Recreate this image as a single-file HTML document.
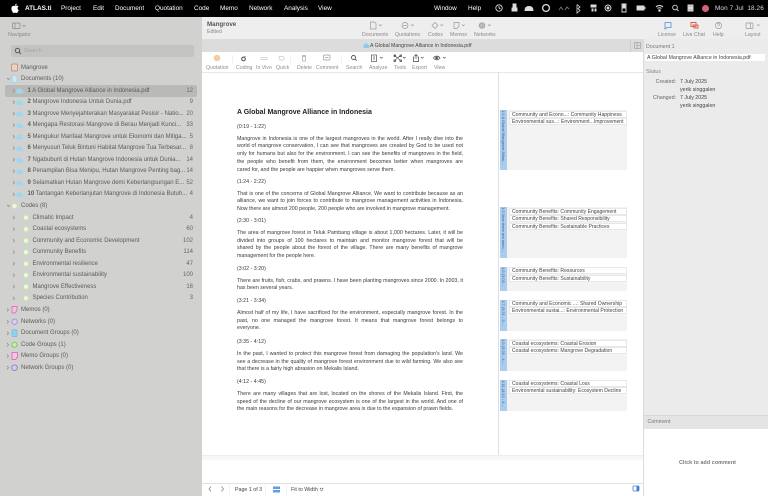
<!DOCTYPE html>
<html><head><meta charset="utf-8">
<style>
html,body{margin:0;padding:0;width:768px;height:496px;overflow:hidden;background:#fff}
body{font-family:"Liberation Sans",sans-serif;position:relative;color:#333}
div,span,svg{position:absolute}
.t{white-space:nowrap;line-height:8px}
.m{top:4.5px;font-size:6.4px;color:#fff;white-space:nowrap;line-height:8px}
.lb{font-size:5.2px;color:#8a8a8a;top:32px;white-space:nowrap;line-height:7px}
.lc{font-size:5.2px;color:#8d8d8d;top:65px;white-space:nowrap;line-height:7px}
.r{font-size:6px;color:#5a5a5a;white-space:nowrap;line-height:8px}
.n{font-size:6px;color:#666;white-space:nowrap;line-height:8px;right:575px;text-align:right}
.l{left:237px;width:226px;font-size:5.3px;line-height:7px;color:#3a3a3a;text-align:justify;text-align-last:justify;white-space:nowrap;font-family:"Liberation Sans",sans-serif}
.e{text-align-last:left}
.box{left:507px;width:120px;background:#f3f3f3}
.blue{left:500px;width:7px;background:#a9cdee}
.row{left:509px;width:118px;height:7px;background:#fff;border:.5px solid #e8e8e8;box-sizing:border-box;font-size:5.1px;line-height:6.4px;color:#444;white-space:nowrap;padding-left:2px}
.v{left:500px;width:7px;writing-mode:vertical-rl;font-size:4px;line-height:7px;color:#3e6085;white-space:nowrap;text-align:left;overflow:hidden}
</style></head><body>

<!-- menu bar -->
<div style="left:0;top:0;width:768px;height:17px;background:#000"></div>
<svg style="left:10px;top:3px" width="10" height="11" viewBox="0 0 10 11"><path d="M5 3C4 2.5 2 2.500 1.500 4.500 1 6.500 2.500 10 4 10c.5 0 .7-.3 1.200-.3S6 10 6.500 10C7.500 10 8.500 8 8.700 7 7.300 6.500 7 4.300 8.500 3.500 7.500 2.300 6 2.600 5 3zM5 2.600C5 1.500 5.800.7 6.700.6 6.800 1.700 6 2.600 5 2.600z" fill="#fff"/></svg>
<div class="m" style="left:25px;font-weight:bold">ATLAS.ti</div>
<div class="m" style="left:61px">Project</div>
<div class="m" style="left:93px">Edit</div>
<div class="m" style="left:115px">Document</div>
<div class="m" style="left:155px">Quotation</div>
<div class="m" style="left:194px">Code</div>
<div class="m" style="left:220px">Memo</div>
<div class="m" style="left:249px">Network</div>
<div class="m" style="left:284px">Analysis</div>
<div class="m" style="left:318px">View</div>
<div class="m" style="left:434px">Window</div>
<div class="m" style="left:468px">Help</div>
<svg style="left:494px;top:0" width="236" height="17" viewBox="494 0 236 17" fill="none" stroke="#ddd" stroke-width=".9">
<circle cx="499" cy="8" r="3.200"/><path d="M499 6v2l1.500 1"/>
<path d="M512 11h5V8h-5zM513 7h3V4h-3z" fill="#ddd"/>
<path d="M525 10.500c0-3 2-4 4-4s4 1 4 4z" fill="#ddd"/>
<circle cx="546" cy="8" r="3.400" stroke-width="1.300"/>
<path d="M559 10l2-3 2 3M565 10l2-3 2 2" stroke="#777"/>
<path d="M577 4.500l3 2.500-2 1.500 2 2-3 2.500V4.500" stroke-width=".8"/>
<path d="M591 5h5v2h-5zM592 9h1v2h-1zM595 9h1v2h-1z" fill="#ddd"/>
<circle cx="608" cy="8" r="3"/><circle cx="608" cy="8" r="1" fill="#ddd"/>
<path d="M622 4h4v8h-4z"/><path d="M623 5h2v3h-2z" fill="#ddd"/>
<path d="M637 6h7v4h-7z" fill="#ddd"/><path d="M645 7v2"/>
<path d="M656 7c2-2 5-2 7 0M657.500 8.500c1-1 3-1 4 0" stroke-width="1"/><circle cx="659.500" cy="10.500" r=".8" fill="#ddd"/>
<circle cx="675" cy="7.500" r="2.300"/><path d="M677 9.500l1.500 1.500"/>
<path d="M688 5h5v2.500h-5zM688 8.500h5V11h-5z" fill="#bbb"/>
</svg>
<div style="left:702px;top:5px;width:7px;height:7px;border-radius:50%;background:#d9607a"></div>
<div class="m" style="left:715px;color:#ddd;letter-spacing:.1px">Mon 7 Jul&nbsp; 18.26</div>

<!-- sidebar -->
<div style="left:0;top:17px;width:202px;height:479px;background:#d1d2d0"></div>
<div style="left:202px;top:17px;width:566px;height:22px;background:#eeeeee"></div>
<div style="left:202px;top:39px;width:566px;height:13px;background:#dcdcdc"></div>
<div style="left:202px;top:52px;width:442px;height:20px;background:#fff"></div>
<div style="left:202px;top:72px;width:442px;height:.5px;background:#e8e8e8"></div>

<svg style="left:12px;top:22px" width="16" height="8" fill="none" stroke="#8a8a8a" stroke-width=".7"><rect x=".5" y="1" width="7.500" height="5.500" rx="1"/><path d="M3 1v5.500"/><path d="M10.500 3l1.500 1.500L13.500 3"/></svg>
<div class="t" style="left:8px;top:31px;font-size:5.4px;color:#8a8a8a">Navigator</div>
<div style="left:11px;top:45px;width:183px;height:12px;background:#c3c4c2;border-radius:2px"></div>
<svg style="left:14px;top:47px" width="8" height="8" fill="none" stroke="#555" stroke-width="1"><circle cx="3.500" cy="3.500" r="2.200"/><path d="M5.200 5.200L7 7"/></svg>
<div class="t" style="left:24px;top:47px;font-size:5.6px;color:#a4a5a3">Search</div>

<div style="left:5px;top:85px;width:192px;height:11.500px;background:#b9bab8;border-radius:2px"></div>

<svg style="left:0;top:60px" width="60" height="316" viewBox="0 60 60 316">
<g fill="none" stroke="#8a8a8a" stroke-width=".7">
<path d="M7 78l1.500 1.500L10 78M7 205l1.500 1.500L10 205"/>
<path d="M13 89l1.500 1.700L13 92.500M13 100.500l1.500 1.700-1.500 1.700M13 112l1.500 1.700-1.500 1.700M13 123.500l1.500 1.700-1.500 1.700M13 135l1.500 1.700-1.500 1.700M13 146.500l1.500 1.700-1.500 1.700M13 158l1.500 1.700-1.500 1.700M13 169.500l1.500 1.700-1.500 1.700M13 181l1.500 1.700-1.500 1.700M13 192.500l1.500 1.700-1.500 1.700"/>
<path d="M13 216l1.500 1.700-1.500 1.700M13 227.500l1.500 1.700-1.500 1.700M13 239l1.500 1.700-1.500 1.700M13 250.500l1.500 1.700-1.500 1.700M13 262l1.500 1.700-1.500 1.700M13 273.500l1.500 1.700-1.500 1.700M13 285l1.500 1.700-1.500 1.700M13 296.500l1.500 1.700-1.500 1.700"/>
<path d="M7 308l1.500 1.700L7 311.500M7 320l1.500 1.700L7 323.500M7 331.500l1.500 1.700L7 335M7 343l1.500 1.700L7 346.500M7 354.500l1.500 1.700L7 358M7 366l1.500 1.700L7 369.500"/>
</g>
<rect x="11.500" y="64" width="6" height="7" rx="1" fill="#e7d3c5" stroke="#c97f5a" stroke-width=".7"/>
<rect x="12" y="75.500" width="5" height="7" rx="1" fill="#cde9f5" stroke="#8fcbe6" stroke-width=".6"/>
<g fill="#a3d6ee"><path d="M17.500 93.500c-1 0-1.300-.7-1.300-1.500 0-2 1-3.500 2.800-3.500 1.500 0 2.500.9 3 2 .7.200 1.500.8 1.500 1.500 0 1-.5 1.500-1.500 1.500z"/>
<path d="M17.500 105c-1 0-1.300-.7-1.300-1.500 0-2 1-3.500 2.800-3.500 1.500 0 2.500.9 3 2 .7.200 1.500.8 1.500 1.500 0 1-.5 1.500-1.500 1.500z"/>
<path d="M17.500 116.500c-1 0-1.300-.7-1.300-1.500 0-2 1-3.500 2.800-3.500 1.500 0 2.500.9 3 2 .7.200 1.500.8 1.500 1.500 0 1-.5 1.500-1.500 1.500z"/>
<path d="M17.500 128c-1 0-1.300-.7-1.300-1.500 0-2 1-3.500 2.800-3.500 1.500 0 2.500.9 3 2 .7.200 1.500.8 1.500 1.500 0 1-.5 1.500-1.500 1.500z"/>
<path d="M17.500 139.500c-1 0-1.300-.7-1.300-1.500 0-2 1-3.500 2.800-3.500 1.500 0 2.500.9 3 2 .7.200 1.500.8 1.500 1.500 0 1-.5 1.500-1.500 1.500z"/>
<path d="M17.500 151c-1 0-1.300-.7-1.300-1.500 0-2 1-3.500 2.800-3.500 1.500 0 2.500.9 3 2 .7.200 1.500.8 1.500 1.500 0 1-.5 1.500-1.500 1.500z"/>
<path d="M17.500 162.500c-1 0-1.300-.7-1.300-1.500 0-2 1-3.500 2.800-3.500 1.500 0 2.500.9 3 2 .7.200 1.500.8 1.500 1.500 0 1-.5 1.500-1.500 1.500z"/>
<path d="M17.500 174c-1 0-1.300-.7-1.300-1.500 0-2 1-3.500 2.800-3.500 1.500 0 2.500.9 3 2 .7.200 1.500.8 1.500 1.500 0 1-.5 1.500-1.500 1.500z"/>
<path d="M17.500 185.500c-1 0-1.300-.7-1.300-1.500 0-2 1-3.500 2.800-3.500 1.500 0 2.500.9 3 2 .7.200 1.500.8 1.500 1.500 0 1-.5 1.500-1.500 1.500z"/>
<path d="M17.500 197c-1 0-1.300-.7-1.300-1.500 0-2 1-3.500 2.800-3.500 1.500 0 2.500.9 3 2 .7.200 1.500.8 1.500 1.500 0 1-.5 1.500-1.500 1.500z"/></g>
<g fill="#eef6e2" stroke="#c6e5ab" stroke-width="1">
<circle cx="14.500" cy="206" r="2.600"/>
<circle cx="26" cy="217.700" r="2.600"/><circle cx="26" cy="229.200" r="2.600"/><circle cx="26" cy="240.700" r="2.600"/><circle cx="26" cy="252.200" r="2.600"/><circle cx="26" cy="263.700" r="2.600"/><circle cx="26" cy="275.200" r="2.600"/><circle cx="26" cy="286.700" r="2.600"/><circle cx="26" cy="298.200" r="2.600"/></g>
<path d="M12 306.500h5v4l-2 2.500h-3z" fill="#f2c2e4" stroke="#d466b6" stroke-width=".8"/>
<circle cx="14.500" cy="321.700" r="2.700" fill="#d8cdf0" stroke="#9a83d0" stroke-width=".7"/>
<rect x="12" y="329.700" width="5" height="7" rx="1" fill="#8fd0ee" stroke="#6db9dc" stroke-width=".6"/>
<circle cx="14.500" cy="344.700" r="2.600" fill="#c8eaae" stroke="#7cc65a" stroke-width=".9"/>
<path d="M12 352.500h5.500v4.500l-2 2.500H12z" fill="#f5c6e5" stroke="#dd5fb4" stroke-width=".8"/>
<circle cx="14.500" cy="367.700" r="2.800" fill="#d8cdf0" stroke="#8a70c4" stroke-width=".8"/>
</svg>

<div class="r" style="left:21px;top:63.500px">Mangrove</div>
<div class="r" style="left:21px;top:75px">Documents (10)</div>
<div class="r" style="left:27.500px;top:86.700px"><b>1</b> A Global Mangrove Alliance in Indonesia.pdf</div><div class="n" style="top:86.700px">12</div>
<div class="r" style="left:27.500px;top:98.200px"><b>2</b> Mangrove Indonesia Untuk Dunia.pdf</div><div class="n" style="top:98.200px">9</div>
<div class="r" style="left:27.500px;top:109.700px"><b>3</b> Mangrove Menyejahterakan Masyarakat Pesisir - Natio...</div><div class="n" style="top:109.700px">20</div>
<div class="r" style="left:27.500px;top:121.200px"><b>4</b> Mengapa Restorasi Mangrove di Berau Menjadi Kunci...</div><div class="n" style="top:121.200px">33</div>
<div class="r" style="left:27.500px;top:132.700px"><b>5</b> Mengukur Manfaat Mangrove untuk Ekonomi dan Mitiga...</div><div class="n" style="top:132.700px">5</div>
<div class="r" style="left:27.500px;top:144.200px"><b>6</b> Menyusuri Teluk Bintuni Habitat Mangrove Tua Terbesar...</div><div class="n" style="top:144.200px">8</div>
<div class="r" style="left:27.500px;top:155.700px"><b>7</b> Ngabuburit di Hutan Mangrove Indonesia untuk Dunia...</div><div class="n" style="top:155.700px">14</div>
<div class="r" style="left:27.500px;top:167.200px"><b>8</b> Penampilan Bisa Menipu, Hutan Mangrove Penting bag...</div><div class="n" style="top:167.200px">14</div>
<div class="r" style="left:27.500px;top:178.700px"><b>9</b> Selamatkan Hutan Mangrove demi Keberlangsungan E...</div><div class="n" style="top:178.700px">52</div>
<div class="r" style="left:27.500px;top:190.200px"><b>10</b> Tantangan Keberlanjutan Mangrove di Indonesia Butuh...</div><div class="n" style="top:190.200px">4</div>
<div class="r" style="left:21px;top:202px">Codes (8)</div>
<div class="r" style="left:32.500px;top:213.700px">Climatic Impact</div><div class="n" style="top:213.700px">4</div>
<div class="r" style="left:32.500px;top:225.200px">Coastal ecosystems</div><div class="n" style="top:225.200px">60</div>
<div class="r" style="left:32.500px;top:236.700px">Community and Economic Development</div><div class="n" style="top:236.700px">102</div>
<div class="r" style="left:32.500px;top:248.200px">Community Benefits</div><div class="n" style="top:248.200px">114</div>
<div class="r" style="left:32.500px;top:259.700px">Environmental resilience</div><div class="n" style="top:259.700px">47</div>
<div class="r" style="left:32.500px;top:271.200px">Environmental sustainability</div><div class="n" style="top:271.200px">100</div>
<div class="r" style="left:32.500px;top:282.700px">Mangrove Effectiveness</div><div class="n" style="top:282.700px">16</div>
<div class="r" style="left:32.500px;top:294.200px">Species Contribution</div><div class="n" style="top:294.200px">3</div>
<div class="r" style="left:21px;top:306px">Memos (0)</div>
<div class="r" style="left:21px;top:317.700px">Networks (0)</div>
<div class="r" style="left:21px;top:329.200px">Document Groups (0)</div>
<div class="r" style="left:21px;top:340.700px">Code Groups (1)</div>
<div class="r" style="left:21px;top:352.200px">Memo Groups (0)</div>
<div class="r" style="left:21px;top:363.700px">Network Groups (0)</div>

<!-- header -->
<div class="t" style="left:207px;top:21px;font-size:6.2px;font-weight:bold;color:#555">Mangrove</div>
<div class="t" style="left:207px;top:27.500px;font-size:5.2px;color:#888">Edited</div>

<svg style="left:360px;top:20px" width="405" height="12" viewBox="360 20 405 12" fill="none" stroke="#999" stroke-width=".7">
<path d="M370.500 22h4l1.500 1.500V29h-5.500z"/><path d="M379 24.500l1.300 1.300 1.300-1.300"/>
<circle cx="405" cy="25.500" r="3"/><path d="M403 25.500h4"/><path d="M411 24.500l1.300 1.300 1.300-1.300"/>
<path d="M432 25.500l3-3 3 3-3 3z"/><path d="M440.500 24.500l1.300 1.300 1.300-1.300"/>
<path d="M454 22.500h5v3.500l-2 2.500h-3z"/><path d="M462 24.500l1.300 1.300 1.300-1.300"/>
<circle cx="482" cy="25.500" r="2.800" fill="#bbb"/><path d="M488 24.500l1.300 1.300 1.300-1.300"/>
<path d="M665 22.500h6v5h-4l-2 1.500z" stroke="#4a90d9" stroke-width=".8"/>
<path d="M691 22.500h5v4h-5z" stroke="#e25b52" stroke-width=".9"/><path d="M693 25h5v3h-4z" stroke="#e25b52" stroke-width=".9"/>
<circle cx="718.500" cy="25.500" r="3.100"/><path d="M717.500 24.500c0-1.300 2-1.300 2 0 0 .8-1 .8-1 1.700"/>
<rect x="746" y="23" width="7" height="5.500" rx=".8"/><path d="M750.500 23v5.500"/><path d="M757 24.500l1.300 1.300 1.300-1.300"/>
</svg>
<div class="lb" style="left:362px">Documents</div>
<div class="lb" style="left:395px">Quotations</div>
<div class="lb" style="left:428px">Codes</div>
<div class="lb" style="left:450px">Memos</div>
<div class="lb" style="left:474px">Networks</div>
<div class="lb" style="left:658px">License</div>
<div class="lb" style="left:683px">Live Chat</div>
<div class="lb" style="left:713px">Help</div>
<div class="lb" style="left:745px">Layout</div>

<!-- tab -->
<svg style="left:363px;top:42px" width="7" height="7"><path d="M1.500 6C.7 6 .3 5.400.3 4.700.3 3 1.200 1.500 3 1.500c1.300 0 2 .6 2.500 1.500.7.200 1.200.8 1.200 1.400C6.700 5.400 6 6 5.300 6z" fill="#8ccbe9"/></svg>
<div class="t" style="left:370px;top:41.500px;font-size:5.2px;color:#444">A Global Mangrove Alliance in Indonesia.pdf</div>

<!-- quotation toolbar -->
<svg style="left:204px;top:53px" width="250" height="11" viewBox="204 53 250 11" fill="none" stroke="#999" stroke-width=".7">
<circle cx="217" cy="58" r="2.800" fill="#f3cfa5" stroke="#f0c392"/>
<circle cx="243.500" cy="59" r="1.800" stroke="#555" stroke-width="1.100"/><circle cx="245" cy="56.500" r=".7" fill="#e08a3c" stroke="none"/>
<path d="M261 57.500h6v2h-6z" stroke="#ccc"/>
<path d="M279 56.500h4l1.500 2-2 2-3-1z" stroke="#ccc"/>
<path d="M302 55.500h4M302.500 56.500h3V61h-3z" stroke="#aaa"/>
<rect x="323.500" y="55" width="6.500" height="5" rx="1"/><path d="M325 57.500h3.500"/>
<circle cx="353.500" cy="57.500" r="2" stroke="#555" stroke-width=".9"/><path d="M355 59l1.700 1.700" stroke="#555" stroke-width=".9"/>
<rect x="371.500" y="55" width="5" height="6.500" stroke="#555"/><path d="M373 57h2M373 59h2" stroke="#555"/><path d="M380 57l1.300 1.300 1.300-1.300" stroke="#555"/>
<path d="M394.500 55.500l6 5M400.500 55.500l-6 5M394 55h1.500v1.500H394zM400 55h1.500v1.500H400zM394 60h1.500v1.500H394zM400 60h1.500v1.500H400z" stroke="#444"/><path d="M403 57l1.300 1.300 1.300-1.300" stroke="#555"/>
<path d="M414.500 57h-1v4.500h5V57h-1M416 59V54.500M414.500 56l1.500-1.500 1.500 1.500" stroke="#444"/><path d="M421 57l1.300 1.300 1.300-1.300" stroke="#555"/>
<path d="M433.500 58c1.500-2.500 5-2.500 6.500 0-1.500 2.500-5 2.500-6.500 0z" stroke="#444"/><circle cx="436.700" cy="58" r="1.300" fill="#444"/><path d="M443 57l1.300 1.300 1.300-1.300" stroke="#555"/>
<path d="M232.500 55v8M290.500 55v8M341.500 55v8" stroke="#e8e8e8"/>
</svg>
<div class="lc" style="left:206px">Quotation</div>
<div class="lc" style="left:236px">Coding</div>
<div class="lc" style="left:256px">In Vivo</div>
<div class="lc" style="left:276px">Quick</div>
<div class="lc" style="left:297px">Delete</div>
<div class="lc" style="left:316px">Comment</div>
<div class="lc" style="left:346px">Search</div>
<div class="lc" style="left:369px">Analyze</div>
<div class="lc" style="left:394px">Tools</div>
<div class="lc" style="left:412px">Export</div>
<div class="lc" style="left:434px">View</div>

<!-- document -->
<div style="left:498px;top:72px;width:1px;height:383px;background:#dedede"></div>
<div class="t" style="left:237px;top:108px;font-size:7px;font-weight:bold;color:#222;line-height:9px">A Global Mangrove Alliance in Indonesia</div>

<div class="l e" style="top:123.500px">(0:19 - 1:22)</div>
<div class="l" style="top:135.700px">Mangrove in Indonesia is one of the largest mangroves in the world. After I really dive into the</div>
<div class="l" style="top:143.400px">world of mangrove conservation, I can see that mangroves are created by God to be used not</div>
<div class="l" style="top:151.100px">only for humans but also for the environment. I can see the benefits of mangroves in the field,</div>
<div class="l" style="top:158.800px">the people who benefit from them, the environment becomes better when mangroves are</div>
<div class="l e" style="top:166.500px">cared for, and the people are happier when mangroves serve them.</div>
<div class="l e" style="top:179px">(1:24 - 2:22)</div>
<div class="l" style="top:190.500px">That is one of the concerns of Global Mangrove Alliance. We want to contribute because as an</div>
<div class="l" style="top:198.200px">alliance, we want to join forces to contribute to mangrove management activities in Indonesia.</div>
<div class="l e" style="top:205.900px">Now there are almost 200 people, 200 people who are involved in mangrove management.</div>
<div class="l e" style="top:218px">(2:30 - 3:01)</div>
<div class="l" style="top:230px">The area of mangrove forest in Teluk Pambang village is about 1,000 hectares. Later, it will be</div>
<div class="l" style="top:237.700px">divided into groups of 100 hectares to maintain and monitor mangrove forest that will be</div>
<div class="l" style="top:245.400px">shared by the people about the forest of the village. There are many benefits of mangrove</div>
<div class="l e" style="top:253.100px">management for the people here.</div>
<div class="l e" style="top:266px">(3:02 - 3:20)</div>
<div class="l" style="top:277.500px">There are fruits, fish, crabs, and prawns. I have been planting mangroves since 2000. In 2003, it</div>
<div class="l e" style="top:285.200px">has been several years.</div>
<div class="l e" style="top:298px">(3:21 - 3:34)</div>
<div class="l" style="top:310px">Almost half of my life, I have sacrificed for the environment, especially mangrove forest. In the</div>
<div class="l" style="top:317.700px">past, no one managed the mangrove forest. It means that mangrove forest belongs to</div>
<div class="l e" style="top:325.400px">everyone.</div>
<div class="l e" style="top:339px">(3:35 - 4:12)</div>
<div class="l" style="top:351px">In the past, I wanted to protect this mangrove forest from damaging the population's land. We</div>
<div class="l" style="top:358.700px">see a decrease in the quality of mangrove forest environment due to wild farming. We also see</div>
<div class="l e" style="top:366.400px">that there is a fairly high abrasion on Mekalis Island.</div>
<div class="l e" style="top:379px">(4:12 - 4:45)</div>
<div class="l" style="top:391px">There are many villages that are lost, located on the shores of the Mekalis Island. First, the</div>
<div class="l" style="top:398.700px">speed of the decline of our mangrove ecosystem is one of the largest in the world. And one of</div>
<div class="l e" style="top:406.400px">the main reasons for the decrease in mangrove area is due to the expansion of prawn fields.</div>

<!-- margin -->
<div class="box" style="top:110px;height:60px"></div><div class="blue" style="top:110px;height:60px"></div>
<div class="v" style="top:110px;height:60px">1:1 A Global Mangrove Allian...</div>
<div class="row" style="top:110.500px">Community and Econo...: Community Happiness</div>
<div class="row" style="top:118px">Environmental sus...: Environment...Improvement</div>

<div class="box" style="top:207px;height:51px"></div><div class="blue" style="top:207px;height:51px"></div>
<div class="v" style="top:207px;height:51px">1:3 Now there are almo...</div>
<div class="row" style="top:207.500px">Community Benefits: Community Engagement</div>
<div class="row" style="top:215px">Community Benefits: Shared Responsibility</div>
<div class="row" style="top:222.500px">Community Benefits: Sustainable Practices</div>

<div class="box" style="top:267px;height:24px"></div><div class="blue" style="top:267px;height:24px"></div>
<div class="v" style="top:267px;height:24px">1:5 (3:02...</div>
<div class="row" style="top:267px">Community Benefits: Resources</div>
<div class="row" style="top:274.500px">Community Benefits: Sustainability</div>

<div class="box" style="top:300px;height:31px"></div><div class="blue" style="top:300px;height:31px"></div>
<div class="v" style="top:300px;height:31px">1:7 (3:21 - 3:...</div>
<div class="row" style="top:299.500px">Community and Economic ...: Shared Ownership</div>
<div class="row" style="top:307px">Environmental sustai...: Environmental Protection</div>

<div class="box" style="top:339px;height:32px"></div><div class="blue" style="top:339px;height:32px"></div>
<div class="v" style="top:339px;height:32px">1:9 (3:35 - 4:...</div>
<div class="row" style="top:339.500px">Coastal ecosystems: Coastal Erosion</div>
<div class="row" style="top:347px">Coastal ecosystems: Mangrove Degradation</div>

<div class="box" style="top:380px;height:31px"></div><div class="blue" style="top:380px;height:31px"></div>
<div class="v" style="top:380px;height:31px">1:11 (4:12 - 4...</div>
<div class="row" style="top:379.500px">Coastal ecosystems: Coastal Loss</div>
<div class="row" style="top:387px">Environmental sustainability: Ecosystem Decline</div>

<!-- page break + bottom bar -->
<div style="left:202px;top:455px;width:442px;height:5px;background:#f7f7f7;border-top:.5px solid #eeeeee;box-sizing:border-box"></div>
<div style="left:202px;top:483px;width:442px;height:13px;background:#fff;border-top:.5px solid #e2e2e2;box-sizing:border-box"></div>
<svg style="left:206px;top:484px" width="438" height="12" viewBox="206 484 438 12" fill="none" stroke="#888" stroke-width=".8">
<path d="M211 486.500l-2 2.500 2 2.500M221.500 486.500l2 2.500-2 2.500"/>
<path d="M229.500 484v12M265.500 484v12M286.500 484v12" stroke="#f0f0f0"/>
<rect x="273" y="486.500" width="7" height="2.500" fill="#5d9de0" stroke="none"/><rect x="273" y="490" width="7" height="2.500" fill="#5d9de0" stroke="none"/>
<rect x="633" y="486" width="6" height="5" rx=".7" stroke="#3d83d4"/><rect x="636.500" y="486" width="2.500" height="5" fill="#3d83d4" stroke="none"/>
</svg>
<div class="t" style="left:235px;top:486px;font-size:5.3px;color:#444">Page 1 of 3</div>
<div class="t" style="left:291px;top:486px;font-size:5.3px;color:#444">Fit to Width ≎</div>

<!-- right panel -->
<div style="left:630px;top:39px;width:14px;height:13px;background:#dcdcdc;border-left:.5px solid #ccc;box-sizing:border-box"></div>
<svg style="left:634px;top:42px" width="7" height="7" fill="none" stroke="#999" stroke-width=".6"><rect x=".5" y=".5" width="6" height="6"/><path d="M3 .5v6M3 3.500h3.500"/></svg>
<div style="left:643px;top:39px;width:125px;height:376px;background:#ebebeb;border-left:.5px solid #dcdcdc;box-sizing:border-box"></div>
<div class="t" style="left:646px;top:42.500px;font-size:5.3px;color:#777">Document 1</div>
<div style="left:645px;top:54px;width:120px;height:7px;background:#fff"></div>
<div class="t" style="left:647px;top:53.500px;font-size:5.3px;color:#444">A Global Mangrove Alliance in Indonesia.pdf</div>
<div class="t" style="left:646px;top:68px;font-size:5.300px;color:#888">Status</div>
<div class="t" style="right:92px;top:78px;font-size:5.300px;color:#666">Created:</div>
<div class="t" style="left:680px;top:78px;font-size:5.300px;color:#444">7 July 2025</div>
<div class="t" style="left:680px;top:86px;font-size:5.300px;color:#444">yerik singgalen</div>
<div class="t" style="right:92px;top:94px;font-size:5.300px;color:#666">Changed:</div>
<div class="t" style="left:680px;top:94px;font-size:5.300px;color:#444">7 July 2025</div>
<div class="t" style="left:680px;top:102px;font-size:5.300px;color:#444">yerik singgalen</div>
<div style="left:643px;top:415px;width:125px;height:13.500px;background:#e4e4e4;border-top:.5px solid #d8d8d8;border-left:.5px solid #dcdcdc;box-sizing:border-box"></div>
<div class="t" style="left:647.500px;top:418px;font-size:5.300px;color:#777">Comment</div>
<div style="left:643px;top:428.500px;width:.5px;height:68px;background:#dcdcdc"></div>
<div class="t" style="left:679px;top:459px;font-size:5.300px;color:#777;font-weight:bold;letter-spacing:.1px">Click to add comment</div>

</body></html>
